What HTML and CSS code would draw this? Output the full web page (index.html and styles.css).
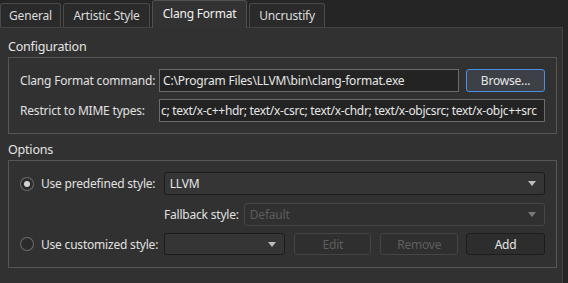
FILE: index.html
```html
<!DOCTYPE html>
<html>
<head>
<meta charset="utf-8">
<link rel="stylesheet" href="styles.css">
</head>
<body>
<div class="tabs">
  <div class="tab t-general">General</div>
  <div class="tab t-artistic">Artistic Style</div>
  <div class="tab t-clang active">Clang Format</div>
  <div class="tab t-uncrustify">Uncrustify</div>
</div>
<div class="panel">
  <div class="group-title first">Configuration</div>
  <div class="group config">
    <div class="row">
      <span class="label lbl-cmd">Clang Format command:</span>
      <div class="input cmd-input">C:\Program Files\LLVM\bin\clang-format.exe</div>
      <div class="btn browse">Browse...</div>
    </div>
    <div class="row">
      <span class="label lbl-cmd">Restrict to MIME types:</span>
      <div class="input mime-input"><span class="mime-text">c; text/x-c++hdr; text/x-csrc; text/x-chdr; text/x-objcsrc; text/x-objc++src</span></div>
    </div>
  </div>
  <div class="group-title">Options</div>
  <div class="group options">
    <div class="row">
      <span class="radio checked"></span>
      <span class="label lbl-opt">Use predefined style:</span>
      <div class="combo wide"><span>LLVM</span><span class="arrow"></span></div>
    </div>
    <div class="row fallback">
      <span class="label lbl-fb">Fallback style:</span>
      <div class="combo disabled fb"><span>Default</span><span class="arrow"></span></div>
    </div>
    <div class="row last">
      <span class="radio"></span>
      <span class="label lbl-opt">Use customized style:</span>
      <div class="combo small"><span></span><span class="arrow"></span></div>
      <div class="btn dis b-edit">Edit</div>
      <div class="btn dis b-remove">Remove</div>
      <div class="btn b-add">Add</div>
    </div>
  </div>
</div>
</body>
</html>
```
FILE: styles.css
```css
html, body {
  margin: 0;
  padding: 0;
}
body {
  width: 568px;
  height: 283px;
  overflow: hidden;
  background: #252525;
  font-family: "Segoe UI", "Noto Sans", "Open Sans", sans-serif;
  font-size: 12px;
  letter-spacing: -0.2px;
  color: #e2e2e2;
}
.tabs {
  display: flex;
  align-items: flex-end;
  height: 27px;
  gap: 2px;
  position: relative;
  z-index: 1;
}
.tab {
  box-sizing: border-box;
  height: 24px;
  border: 1px solid #4a4a4a;
  border-bottom: none;
  border-radius: 3px 3px 0 0;
  background: #2a2a2a;
  color: #dcdcdc;
  display: flex;
  align-items: center;
  justify-content: center;
  padding-bottom: 1px;
}
.t-general { width: 61px; }
.t-artistic { width: 87px; }
.t-clang { width: 95px; }
.t-uncrustify { width: 76px; }
.tab.active {
  background: #323232;
  border-color: #505050;
  color: #f0f0f0;
  margin-bottom: -1px;
  height: 28px;
  padding-bottom: 3px;
}
.panel {
  box-sizing: border-box;
  width: 563px;
  height: 260px;
  background: #313131;
  border: 1px solid #434343;
  border-left: none;
  padding-left: 8px;
  padding-top: 10px;
}
.group-title {
  height: 19px;
  line-height: 18px;
  color: #e4e4e4;
  font-size: 12.5px;
}
.group {
  box-sizing: border-box;
  width: 549px;
  border: 1px solid #565656;
  display: flex;
  flex-direction: column;
}
.config {
  padding: 11px;
  gap: 7px;
  margin-bottom: 7px;
}
.row {
  display: flex;
  align-items: center;
  height: 23px;
}
.label {
  white-space: nowrap;
  color: #e0e0e0;
}
.lbl-cmd { width: 139px; }
.input {
  box-sizing: border-box;
  height: 23px;
  background: #232323;
  border: 1px solid #6b6b6b;
  display: flex;
  align-items: center;
  padding-left: 3px;
  white-space: nowrap;
  overflow: hidden;
  color: #e6e6e6;
}
.cmd-input { width: 300px; }
.mime-input {
  width: 386px;
  padding-left: 1px;
  letter-spacing: -0.3px;
}
.btn {
  box-sizing: border-box;
  height: 23px;
  border: 1px solid #1c1c1c;
  border-radius: 3px;
  background: #2d2d2d;
  display: flex;
  align-items: center;
  justify-content: center;
  color: #e6e6e6;
}
.browse {
  width: 79px;
  margin-left: 7px;
  background: #3d4047;
  border-color: #4a90e2;
}
.options {
  padding: 11px 11px 12px 11px;
  gap: 8px;
  height: 108px;
}
.options .row.last { margin-top: -1px; height: 22px; }
.radio {
  box-sizing: border-box;
  width: 14px;
  height: 14px;
  border-radius: 50%;
  border: 1px solid #6a6a6a;
  background: #2b2b2b;
  margin-right: 7px;
  position: relative;
}
.radio.checked::after {
  content: "";
  position: absolute;
  left: 3px;
  top: 3px;
  width: 6px;
  height: 6px;
  border-radius: 50%;
  background: #d4d4d4;
}
.lbl-opt { width: 123px; }
.combo {
  box-sizing: border-box;
  height: 23px;
  border: 1px solid #1c1c1c;
  border-radius: 3px;
  background: #353535;
  display: flex;
  align-items: center;
  justify-content: space-between;
  padding: 0 8px 0 5px;
  color: #e6e6e6;
}
.last .combo, .last .btn { height: 22px; }
.combo .arrow {
  width: 0;
  height: 0;
  border-left: 4px solid transparent;
  border-right: 4px solid transparent;
  border-top: 5px solid #bdbdbd;
}
.wide { width: 382px; }
.fallback { padding-left: 144px; }
.lbl-fb { width: 80px; }
.fb {
  width: 302px;
  border-color: #464646;
  background: #303030;
  color: #5c5c5c;
}
.fb .arrow { border-top-color: #7a7a7a; }
.small { width: 122px; }
.b-edit { width: 77px; margin-left: 9px; }
.b-remove { width: 78px; margin-left: 9px; }
.b-add { width: 79px; margin-left: 8px; }
.dis {
  border-color: #444;
  background: #2f2f2f;
  color: #5e5e5e;
}
```
